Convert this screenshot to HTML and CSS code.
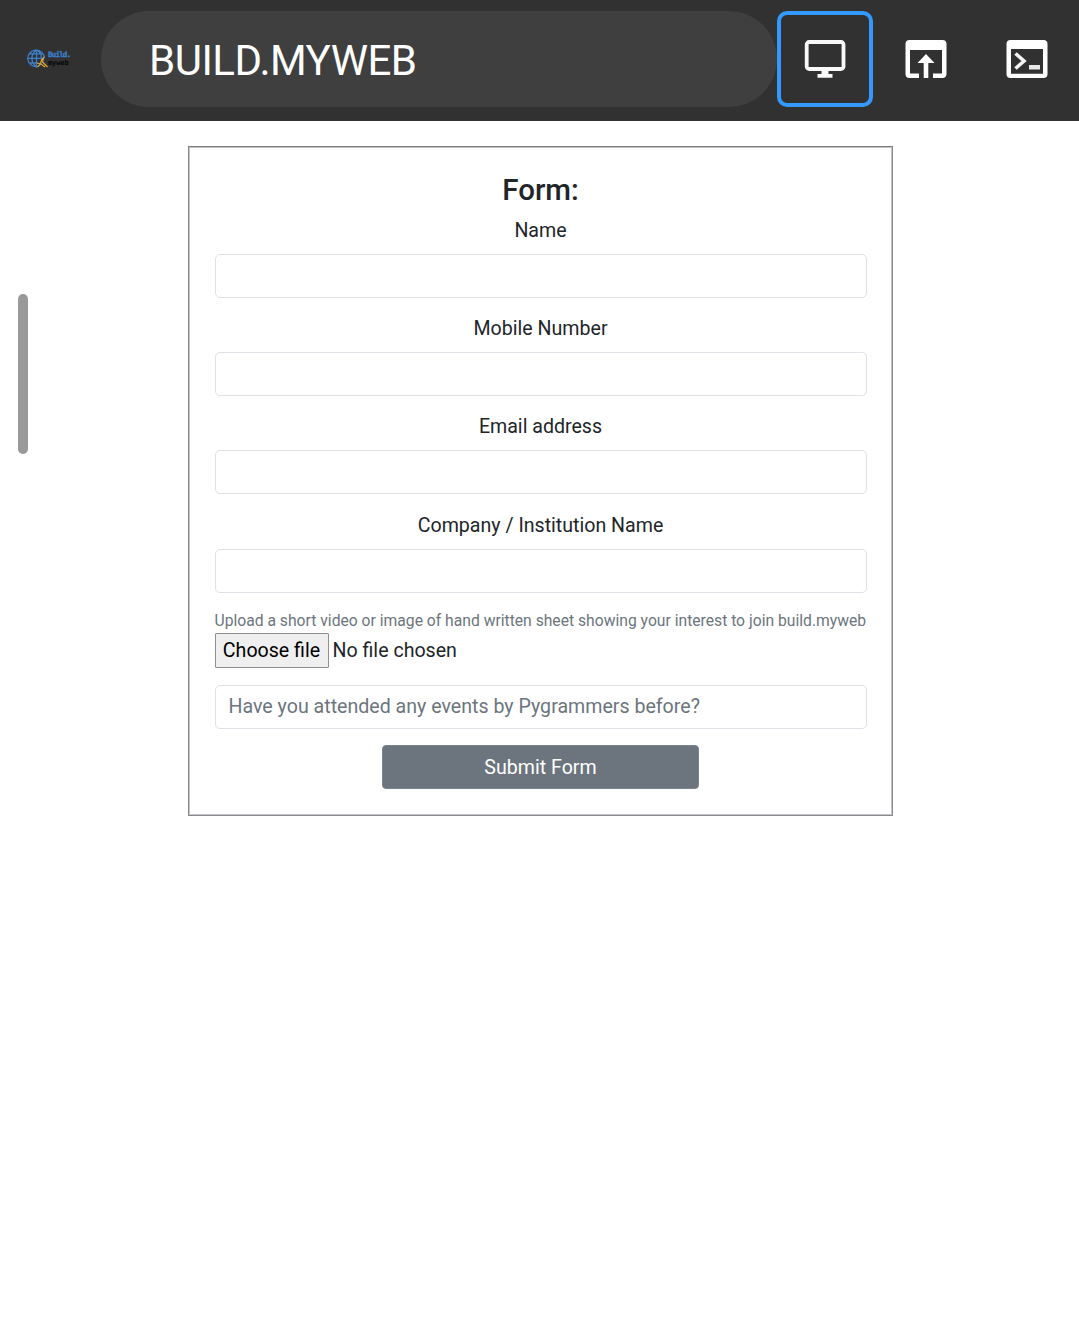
FILE: index.html
```html
<!DOCTYPE html>
<html lang="en">
<head>
<meta charset="utf-8">
<title>BUILD.MYWEB</title>
<link rel="stylesheet" href="styles.css">
</head>
<body>
<header class="topbar">
  <div class="logo">
    <svg class="globe" viewBox="0 0 22 20" aria-hidden="true">
      <g fill="none" stroke="#3c7fca" stroke-width="1.3">
        <path d="M10.500 17.600A8.300 8.300 0 1 1 17.400 9M9.500 1v17M1.300 9.300h16M3 4.800h13M3 14h7M9.500 1C3.500 5 3.500 13.500 9 17.600M9.500 1c3.500 2 5 5 4.800 8"/>
      </g>
      <path d="M10.500 18l3-3 1-4 2-2-1 4 5 5M10 14l4 1 4 3" fill="none" stroke="#dba83c" stroke-width="1.200"/>
    </svg>
    <div class="logo-text"><span class="logo-build">Build.</span><span class="logo-myweb">myweb</span></div>
  </div>
  <div class="address">BUILD.MYWEB</div>
  <nav class="tools">
    <button class="tool tool-active" aria-label="Desktop view">
      <svg viewBox="0 0 48 48"><rect x="5.700" y="7" width="36.800" height="27" rx="2.500" fill="none" stroke="#f8f8f8" stroke-width="3.800"/><path d="M20.500 35h7v4h4v3.800h-15V39h4z" fill="#f8f8f8"/></svg>
    </button>
    <button class="tool" aria-label="Open in browser">
      <svg viewBox="0 0 48 48"><path d="M7.500 5h33a4 4 0 0 1 4 4v30a3.800 3.800 0 0 1-4 4H31v-4.500h9V15H8v23.500h9V43H7.500a4 4 0 0 1-4-4V9a4 4 0 0 1 4-4z" fill="#fff"/><path d="M24 19l8.500 9h-6.200v15h-4.600V28h-6.200z" fill="#fff"/></svg>
    </button>
    <button class="tool" aria-label="Console">
      <svg viewBox="0 0 48 48"><path fill-rule="evenodd" d="M7.500 5h33a4 4 0 0 1 4 4v30a4 4 0 0 1-4 4h-33a4 4 0 0 1-4-4V9a4 4 0 0 1 4-4zM8 14v24.700h32V14z" fill="#fff"/><path d="M12.500 18.500l8.500 7.500-8.500 7.500" fill="none" stroke="#f4f4f4" stroke-width="3.600"/><path d="M26 30h11v4.500H26z" fill="#e8e8e8"/></svg>
    </button>
  </nav>
</header>
<main class="page">
  <div class="scroll-thumb"></div>
  <form class="card">
    <h1 class="title">Form:</h1>
    <div class="field"><label class="label" for="name">Name</label><input class="control" id="name"></div>
    <div class="field"><label class="label" for="mobile">Mobile Number</label><input class="control" id="mobile"></div>
    <div class="field"><label class="label" for="email">Email address</label><input class="control" id="email"></div>
    <div class="field field-last"><label class="label" for="company">Company / Institution Name</label><input class="control" id="company"></div>
    <div class="hint"><span>Upload a short video or image of hand written sheet showing your interest to join build.myweb</span></div>
    <div class="file"><button type="button" class="file-button">Choose file</button><span class="file-name">No file chosen</span></div>
    <input class="control question" placeholder="Have you attended any events by Pygrammers before?">
    <button type="button" class="submit">Submit Form</button>
  </form>
</main>
</body>
</html>
```
FILE: styles.css
```css
* { box-sizing: border-box; }
body {
  margin: 0;
  height: 1338px;
  background: #fff;
  color: #212529;
  font-family: Roboto, "Liberation Sans", sans-serif;
  font-size: 19.6px;
}
button, input { font: inherit; margin: 0; }
.topbar {
  display: flex;
  height: 121px;
  padding: 11px 4px 14px 26px;
  background: #313131;
}
.logo { display: flex; width: 75px; padding-top: 38px; }
.globe { width: 22px; height: 20px; flex: none; margin-left: 1px; }
.logo-text {
  display: flex;
  flex-direction: column;
  font: bold 7px/8px "DejaVu Sans Mono", monospace;
  padding-top: 2px;
  margin-left: -1px;
}
.logo-build { color: #3c7fca; font-size: 7.500px; letter-spacing: -0.800px; -webkit-text-stroke: 0.3px #3c7fca; }
.logo-myweb { color: #050505; letter-spacing: -0.1px; }
.address {
  width: 676px;
  height: 96px;
  padding-left: 48px;
  border-radius: 48px;
  background: #3f3f3f;
  color: #fff;
  font-size: 42px;
  letter-spacing: -0.5px;
  line-height: 99px;
}
.tools { display: flex; gap: 5px; }
.tool {
  display: flex;
  align-items: center;
  justify-content: center;
  width: 96px;
  height: 96px;
  padding: 0;
  border: 4px solid transparent;
  border-radius: 10px;
  background: none;
}
.tool-active { border-color: #3399ff; }
.tool svg { width: 48px; height: 48px; }
.page { display: flex; padding-top: 25px; }
.scroll-thumb {
  width: 10px;
  height: 160px;
  margin: 148px 160px 0 18px;
  border-radius: 5px;
  background: #999;
}
.card {
  display: flex;
  flex-direction: column;
  width: 705px;
  height: 670px;
  padding: 25px 25.500px 0;
  border: 1px solid #88898d;
  border-top-color: #7a7b80;
  box-shadow: inset 0 0 0 1px #c4c4c8;
}
.title {
  margin: 0;
  height: 37px;
  font-size: 29.500px;
  font-weight: 500;
  line-height: 36px;
  text-align: center;
}
.field { height: 98.200px; flex: none; text-align: center; }
.field-last { height: 99px; padding-top: 0.4px; }
.label { display: block; height: 45px; line-height: 43px; }
.control {
  display: block;
  width: 652px;
  height: 44px;
  padding: 0 13px;
  border: 1px solid #dee2e6;
  border-radius: 5px;
  background: #fff;
  outline: none;
}
.control::placeholder { color: #6c757d; opacity: 1; }
.hint {
  height: 30px;
  color: #6c757d;
  font-size: 15.680px;
  line-height: 36px;
  white-space: nowrap;
}
.file { display: flex; height: 35px; margin-bottom: 17px; align-items: center; }
.file-button {
  width: 114px;
  height: 35px;
  padding: 0;
  border: 1px solid #8f8f8f;
  border-radius: 1px;
  background: #efefef;
  color: #000;
}
.file-name { margin-left: 4px; }
.submit {
  align-self: center;
  width: 317px;
  height: 44px;
  margin-top: 16px;
  padding: 2px 0 0;
  border: 1px solid #7b848b;
  border-radius: 4px;
  background: #6c757d;
  color: #fff;
}
```
